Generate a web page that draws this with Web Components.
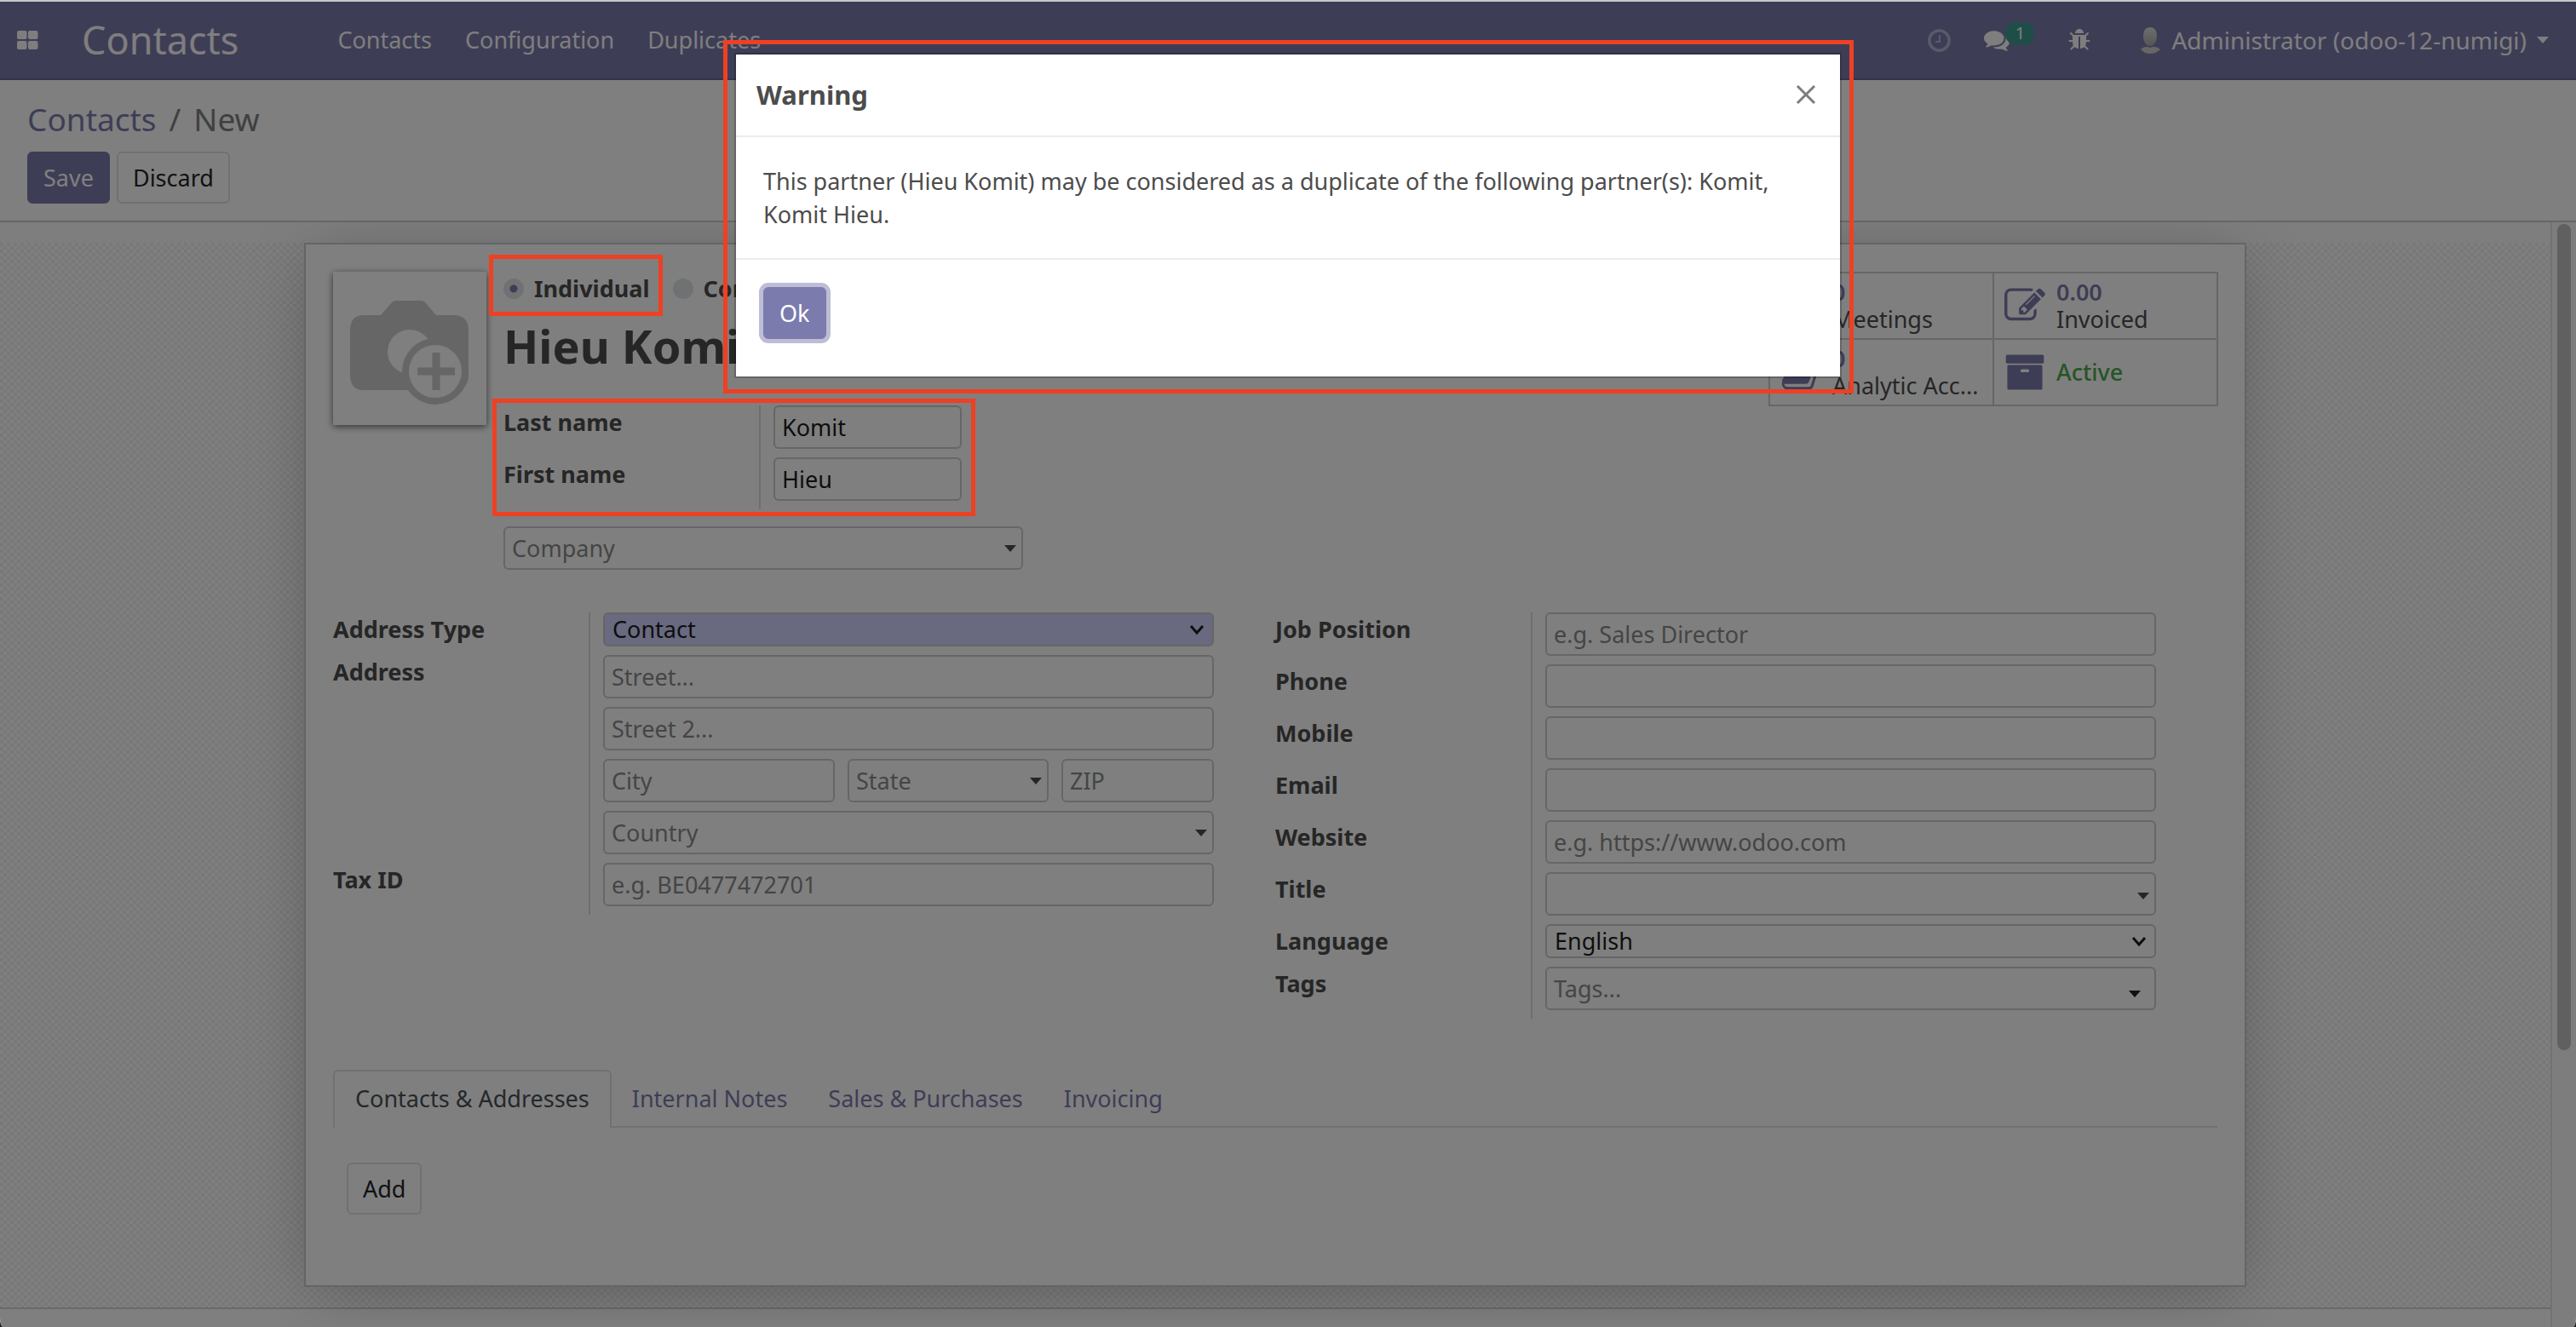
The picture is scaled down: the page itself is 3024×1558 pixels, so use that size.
<!DOCTYPE html>
<html lang="en">
<head>
<meta charset="utf-8">
<title>Contacts - New</title>
<style>
  html, body { margin: 0; height: 100%; }
  body {
    background: #222;
    color: #4c4c4c;
    font: 27px/40px "Noto Sans", "Open Sans", sans-serif;
    overflow: hidden;
  }
</style>
</head>
<body>
<contacts-app></contacts-app>

<script>
const CONTROLS = `
  *, *::before, *::after { box-sizing: border-box; }
  input, select, button { font: inherit; margin: 0; }
  .text, .combo {
    display: block; width: 100%; min-width: 0; height: 51px;
    border: 2px solid #ccc; border-radius: 6px;
    background-color: #fff; color: #1c1c1c; padding: 0 8px; outline: 0;
  }
  .text::placeholder, .combo input::placeholder { color: #8a8a8a; opacity: 1; }
  .combo { display: flex; align-items: center; padding-right: 6px; }
  .combo input { flex: 1; min-width: 0; width: 0; border: 0; padding: 0; background: none; color: inherit; outline: 0; height: 44px; }
  .combo::after { content: ""; border: 7px solid transparent; border-top: 8px solid #4c4c4c; border-bottom: 0; }
  .combo.low { padding-right: 16px; }
  .combo.low::after { border-top-color: #222; margin-top: 12px; }
  .combo.dip::after { margin-top: 4px; }
  .pick { position: relative; display: block; }
  .pick select {
    appearance: none; display: block; width: 100%; height: 40px;
    border: 2px solid #ccc; border-radius: 6px; background: #fff; color: #1c1c1c;
    padding: 0 9px; line-height: 36px; outline: 0;
  }
  .pick.required select { background: #d2d2ff; }
  .pick svg { position: absolute; right: 11px; top: 13px; width: 18px; height: 14px; pointer-events: none; }
`;
const BUTTONS = `
  button { font: inherit; height: 61px; padding: 0 17px; border: 2px solid #dee2e6; border-radius: 6px; background: #fff; color: #212529; }
  button.primary { background: #7c7bad; border-color: #7c7bad; color: #fff; }
`;

function define(name, html, setup) {
  customElements.define(name, class extends HTMLElement {
    connectedCallback() {
      if (this.shadowRoot) return;
      const root = this.attachShadow({ mode: 'open' });
      root.innerHTML = typeof html === 'function' ? html(this) : html;
      if (setup) setup(root, this);
    }
  });
}

const chevron = '<svg viewBox="0 0 18 14" aria-hidden="true"><path d="M2 3l7 8 7-8" fill="none" stroke="#1c1c1c" stroke-width="3"/></svg>';

function control(kind, id, placeholder, value, flags) {
  if (kind === 'select')
    return `<span class="pick ${flags}"><select id="${id}"><option>${value}</option></select>${chevron}</span>`;
  if (kind === 'combo')
    return `<span class="combo ${flags}"><input id="${id}" type="text" placeholder="${placeholder}" aria-label="${placeholder || id}"></span>`;
  return `<input class="text" id="${id}" type="text" placeholder="${placeholder}" value="${value}" aria-label="${placeholder || id}">`;
}

/* One labelled row of a form group */
const ROW = `
  :host { display: grid; grid-template-columns: 300px minmax(0, 1fr); }
  label { font-weight: 700; }
  .cell { border-left: 2px solid #ddd; padding: 0 0 10px 15px; display: flex; flex-direction: column; gap: 10px; }
`;
define('form-field', el => {
  const a = n => el.getAttribute(n) || '';
  return `<style>${CONTROLS}${ROW}</style>
    <label for="field">${a('label')}</label>
    <div class="cell">${control(a('kind'), 'field', a('placeholder'), a('value'), a('look')).replace(/ aria-label="[^"]*"/, '')}</div>`;
});

define('address-field', `<style>${CONTROLS}${ROW}
    .split { display: grid; grid-template-columns: 272fr 236fr 179fr; gap: 15px; }
  </style>
  <label for="street">Address</label>
  <div class="cell">
    ${control('text', 'street', 'Street...', '', '')}
    ${control('text', 'street2', 'Street 2...', '', '')}
    <div class="split">
      ${control('text', 'city', 'City', '', '')}
      ${control('combo', 'state', 'State', '', '')}
      ${control('text', 'zip', 'ZIP', '', '')}
    </div>
    ${control('combo', 'country', 'Country', '', '')}
  </div>`);

define('form-group', `<style>:host { display: block; }</style><slot></slot>`);

define('combo-box', el => `<style>${CONTROLS} :host { display: block; }</style>
  ${control('combo', 'box', el.getAttribute('placeholder') || '', '', '')}`);

const ICONS = {
  edit: 'M888 1184l116-116-152-152-116 116v56h96v96h56zm440-720q-16-16-33 1l-350 350q-17 17-1 33t33-1l350-350q17-17 1-33zm80 594v190q0 119-84.5 203.5t-203.5 84.5h-832q-119 0-203.5-84.5t-84.5-203.5v-832q0-119 84.5-203.5t203.5-84.5h832q63 0 117 25 15 7 18 23 3 17-9 29l-49 49q-14 14-32 8-23-6-45-6h-832q-66 0-113 47t-47 113v832q0 66 47 113t113 47h832q66 0 113-47t47-113v-126q0-13 9-22l64-64q15-15 35-7t20 29zm-96-738l288 288-672 672h-288v-288zm444 132l-92 92-288-288 92-92q28-28 68-28t68 28l152 152q28 28 28 68t-28 68z',
  archive: 'M1088 832q0-26-19-45t-45-19h-256q-26 0-45 19t-19 45 19 45 45 19h256q26 0 45-19t19-45zm576-192v960q0 26-19 45t-45 19h-1408q-26 0-45-19t-19-45v-960q0-26 19-45t45-19h1408q26 0 45 19t19 45zm64-448v256q0 26-19 45t-45 19h-1536q-26 0-45-19t-19-45v-256q0-26 19-45t45-19h1536q26 0 45 19t19 45z',
  book: 'M1703 478q40 57 18 129l-275 906q-19 64-76.5 107.5t-122.5 43.5h-923q-77 0-148.5-53.5t-99.5-131.5q-24-67-2-127 0-4 3-27t4-37q1-8-3-21.5t-3-19.5q2-11 8-21t16.5-23.5 16.5-23.5q23-38 45-91.5t30-91.5q3-10 .5-30t-.5-28q3-11 17-28t17-23q21-36 42-92t25-90q1-9-2.5-32t.5-28q4-13 22-30.5t22-22.5q19-26 42.5-84.5t27.5-96.5q1-8-3-25.5t-2-26.5q2-8 9-18t18-23 17-21q8-12 16.5-30.5t15-35 16-36 19.5-32 26.5-23.5 36-11.5 47.5 5.5l-1 3q38-9 51-9h761q74 0 114 56t18 130l-274 906q-36 119-71.5 153.5t-128.5 34.5h-869q-27 0-38 15-11 16-1 43 24 70 144 70h923q29 0 56-15.5t35-41.5l300-987q7-22 5-57 38 15 59 43z',
  calendar: 'M192 1664h1408v-1024h-1408v1024zM576 448v-288h-64v288zm768 0v-288h-64v288zM1728 384v1280q0 128-128 128h-1408q-128 0-128-128v-1280q0-128 128-128h128v-96q0-160 160-160h64q160 0 160 160v96h384v-96q0-160 160-160h64q160 0 160 160v96h128q128 0 128 128z',
  comments: 'M1408 768q0 139-94 257t-256.5 186.5-353.5 68.5q-86 0-176-16-124 88-278 128-36 9-86 16h-3q-11 0-20.5-8t-11.5-21q-1-3-1-6.5t.5-6.5 2-6l2.5-5 3.5-5.5 4-5 4.5-5 4-4.5q5-6 23-25t26-29.5 22.5-29 25-38.5 20.5-44q-124-72-195-177t-71-224q0-139 94-257t256.5-186.5 353.5-68.5 353.5 68.5 256.5 186.5 94 257zm384 256q0 120-71 224.5t-195 176.5q10 24 20.5 44t25 38.5 22.5 29 26 29.5 23 25q1 1 4 4.5t4.5 5 4 5 3.5 5.5l2.5 5 2 6 .5 6.5-1 6.5q-3 14-13 22t-22 7q-50-7-86-16-154-40-278-128-90 16-176 16-271 0-472-132 58 4 88 4 161 0 309-45t264-129q125-92 192-212t67-254q0-77-23-152 129 71 204 178t75 230z',
  bug: 'M1632 960q0 26-19 45t-45 19h-224q0 171-67 290l208 209q19 19 19 45t-19 45q-18 19-45 19t-45-19l-198-197q-5 5-15 13t-42 28.5-65 36.5-82 29-97 13v-896h-128v896q-51 0-101.5-13.5t-87-33-66-39-43.5-32.5l-15-14-183 207q-20 21-48 21-24 0-43-16-19-18-20.5-44.5t15.5-46.5l202-227q-58-114-58-274h-224q-26 0-45-19t-19-45 19-45 45-19h224v-294l-173-173q-19-19-19-45t19-45 45-19 45 19l173 173h844l173-173q19-19 45-19t45 19 19 45-19 45l-173 173v294h224q26 0 45 19t19 45zm-480-576h-640q0-133 93.5-226.5t226.5-93.5 226.5 93.5 93.5 226.5z'
};
const icon = (name, size) => `<svg width="${size}" height="${size}" viewBox="0 0 1792 1792" fill="currentColor" aria-hidden="true"><path d="${ICONS[name]}"/></svg>`;

define('stat-button', el => {
  const value = el.getAttribute('value');
  return `<style>
    :host { display: block; min-width: 0; border: solid #ccc; border-width: 2px 0 0 2px; }
    button { all: unset; box-sizing: border-box; width: 100%; height: 76px; display: flex; align-items: center; gap: 13px; padding-left: 12px; font: 27px/32px "Noto Sans", sans-serif; white-space: nowrap; }
    svg { flex: none; color: #7c7bad; }
    span { display: block; color: var(--stat-color, #4c4c4c); font-weight: var(--stat-weight, 400); }
    b { display: block; color: #7c7bad; font-weight: 600; }
  </style>
  <button type="button">${icon(el.getAttribute('icon'), 48)}<span>${value ? `<b>${value}</b>` : ''}<slot></slot></span></button>`;
});

define('top-nav', `<style>
    :host { display: flex; align-items: center; height: 92px; box-sizing: border-box; background: #7c7bad; border-bottom: 2px solid #66629c; color: #fcfcfc; padding: 0 32px 0 20px; }
    a { color: inherit; text-decoration: none; }
    svg { display: block; flex: none; }
    .brand { font-size: 45px; line-height: 62px; margin: 0 116px 0 51px; }
    nav { display: flex; gap: 39px; }
    .tray { margin-left: auto; display: flex; align-items: center; }
    button { all: unset; display: flex; align-items: center; }
    .clock { opacity: .45; margin-right: 39px; }
    .chat { position: relative; margin-right: 69px; }
    .badge { position: absolute; left: 25px; top: -6px; min-width: 34px; height: 27px; border-radius: 13px; background: #3c9c8e; font-size: 20px; line-height: 26px; text-align: center; }
    .bug { margin-right: 56px; }
    .user { font-size: 28px; gap: 12px; }
    .user i { border: 7px solid transparent; border-top: 8px solid #fcfcfc; border-bottom: 0; }
  </style>
  <button type="button" aria-label="Apps"><svg width="25" height="22" viewBox="0 0 25 22" fill="currentColor"><rect width="11.500" height="10" rx="2"/><rect x="13" width="11.500" height="10" rx="2"/><rect y="12" width="11.500" height="10" rx="2"/><rect x="13" y="12" width="11.500" height="10" rx="2"/></svg></button>
  <a class="brand" href="#">Contacts</a>
  <nav><a href="#">Contacts</a><a href="#">Configuration</a><a href="#">Duplicates</a></nav>
  <div class="tray">
    <button type="button" class="clock" aria-label="Activities"><svg width="27" height="27" viewBox="0 0 27 27" fill="none" stroke="currentColor"><circle cx="13.500" cy="13.500" r="11.600" stroke-width="3.400"/><path d="M14 7v8H9" stroke-width="2"/></svg></button>
    <button type="button" class="chat" aria-label="Messages">${icon('comments', 30)}<span class="badge">1</span></button>
    <button type="button" class="bug" aria-label="Debug">${icon('bug', 28)}</button>
    <button type="button" class="user"><svg width="25" height="32" viewBox="0 0 25 32"><defs><linearGradient id="g" x2="0" y2="1"><stop stop-color="#ddd"/><stop offset="1" stop-color="#aaa"/></linearGradient></defs><path d="M12 1c5 0 8 4 8 10s-3 12-8 12-8-6-8-12S7 1 12 1z" fill="url(#g)"/><path d="M1 27c3-3 7-4 11-2 4-2 9-1 12 2-3 3-7 5-12 5S4 30 1 27z" fill="#ccc"/></svg><span>Administrator (odoo-12-numigi)</span><i></i></button>
  </div>`);

define('control-panel', `<style>${BUTTONS}
    :host { display: block; background: #fff; border-bottom: 2px solid #ccc; padding: 21px 32px 20px; }
    .crumbs { display: flex; gap: 15px; font-size: 37px; line-height: 50px; color: #808080; margin-bottom: 13px; }
    .crumbs a { color: #7c7bad; text-decoration: none; }
    .actions { display: flex; gap: 8px; }
  </style>
  <nav class="crumbs"><a href="#">Contacts</a><span>/</span><span>New</span></nav>
  <div class="actions"><button type="button" class="primary">Save</button><button type="button">Discard</button></div>`);

define('image-picker', `<style>
    :host { display: block; width: 180px; height: 180px; flex: none; background: #fff; box-shadow: 0 2px 8px rgba(0,0,0,.6); }
    svg { display: block; }
  </style>
  <svg width="180" height="180" viewBox="0 0 180 180" role="img" aria-label="Add a photo">
    <path fill="#ccc" d="M36 51h20l13-15q2-2 5-2h29q3 0 5 2l13 15h20q18 0 18 18v52q0 18-18 18H36q-16 0-16-18V69q0-18 16-18z"/>
    <circle cx="90" cy="94" r="26" fill="#fff"/>
    <circle cx="120" cy="117" r="39" fill="#ccc"/>
    <circle cx="120" cy="117" r="31" fill="#fff"/>
    <path d="M121 95v44M99 117h44" stroke="#ccc" stroke-width="9"/>
  </svg>`);

define('kind-choice', `<style>
    :host { display: flex; gap: 27px; font-weight: 700; }
    label { display: flex; align-items: center; gap: 12px; position: relative; }
    input { appearance: none; margin: 0; width: 24px; height: 24px; border-radius: 50%; background: #dee2e6; }
    input:checked { background: radial-gradient(circle, #7c7bad 4px, #dfe2e7 5px); }
    .marked::after { content: ""; position: absolute; inset: -20px -15px -12px -17px; border: 5px solid #ee4023; z-index: 20; pointer-events: none; }
  </style>
  <label class="marked"><input type="radio" name="kind" checked>Individual</label>
  <label><input type="radio" name="kind">Company</label>`);

define('note-book', `<style>${BUTTONS}
    :host { display: block; }
    nav { display: flex; border-bottom: 2px solid #dee2e6; }
    a { color: #7c7bad; text-decoration: none; padding: 12px 22px; border: 2px solid transparent; border-bottom: 0; }
    a.on { color: #495057; background: #fff; border-color: #dee2e6; border-radius: 6px 6px 0 0; margin-bottom: -2px; padding: 12px 24px 14px; }
    .page { padding: 41px 16px 51px; }
  </style>
  <nav><a class="on" href="#">Contacts &amp; Addresses</a><a href="#">Internal Notes</a><a href="#">Sales &amp; Purchases</a><a href="#">Invoicing</a></nav>
  <div class="page"><button type="button">Add</button></div>`);

define('contact-sheet', `<style>
    :host { display: block; box-sizing: border-box; position: relative; max-width: 2280px; margin: 0 auto; padding: 32px; border: 2px solid #c8c8d3; background: #fff; box-shadow: 0 10px 70px -10px rgba(0,0,0,.28); }
    header { display: flex; align-items: flex-start; gap: 20px; margin-bottom: 50px; }
    .who { flex: 1; min-width: 0; }
    h1 { font-size: 54px; line-height: 74px; font-weight: 700; margin: 10px 0 33px; }
    .names { position: relative; width: 538px; margin-bottom: 20px; }
    .names::after { content: ""; position: absolute; inset: -8px -16px -8px -13px; border: 5px solid #ee4023; z-index: 20; pointer-events: none; }
    combo-box { width: 610px; }
    .stats { display: grid; grid-template-columns: repeat(2, 263px); width: 528px; border: solid #ccc; border-width: 0 2px 2px 0; box-sizing: border-box; margin-right: -1px; }
    .active { --stat-color: #4caa4c; --stat-weight: 500; }
    .groups { display: grid; grid-template-columns: 1fr 1fr; margin-bottom: 60px; align-items: start; }
    form-group { padding-right: 72px; }
  </style>
  <header>
    <image-picker></image-picker>
    <div class="who">
      <kind-choice></kind-choice>
      <h1>Hieu Komit</h1>
      <div class="names">
        <form-field label="Last name" kind="text" value="Komit"></form-field>
        <form-field label="First name" kind="text" value="Hieu"></form-field>
      </div>
      <combo-box placeholder="Company"></combo-box>
    </div>
    <div class="stats">
      <stat-button icon="calendar" value="0">Meetings</stat-button>
      <stat-button icon="edit" value="0.00">Invoiced</stat-button>
      <stat-button icon="book" value="0">Analytic Acc...</stat-button>
      <stat-button icon="archive" class="active">Active</stat-button>
    </div>
  </header>
  <div class="groups">
    <form-group>
      <form-field label="Address Type" kind="select" value="Contact" look="required"></form-field>
      <address-field></address-field>
      <form-field label="Tax ID" kind="text" placeholder="e.g. BE0477472701"></form-field>
    </form-group>
    <form-group>
      <form-field label="Job Position" kind="text" placeholder="e.g. Sales Director"></form-field>
      <form-field label="Phone" kind="text"></form-field>
      <form-field label="Mobile" kind="text"></form-field>
      <form-field label="Email" kind="text"></form-field>
      <form-field label="Website" kind="text" placeholder="e.g. https://www.odoo.com"></form-field>
      <form-field label="Title" kind="combo" look="dip"></form-field>
      <form-field label="Language" kind="select" value="English"></form-field>
      <form-field label="Tags" kind="combo" placeholder="Tags..." look="low"></form-field>
    </form-group>
  </div>
  <note-book></note-book>`);

define('warning-dialog', `<style>${BUTTONS}
    :host { position: fixed; inset: 2px 0 0; z-index: 10; background: rgba(0,0,0,.5); border-radius: 0 0 4px 4px / 0 0 11px 11px; }
    section { position: relative; box-sizing: border-box; width: 1300px; max-width: 96%; margin: 60px auto 0; border: 2px solid rgba(0,0,0,.2); background: #fff padding-box; color: #4c4c4c; }
    section::after { content: ""; position: absolute; inset: -17px -16px -20px -15px; border: 5px solid #ee4023; pointer-events: none; }
    header { display: flex; align-items: center; justify-content: space-between; box-sizing: border-box; height: 97px; padding: 0 28px 2px 24px; border-bottom: 2px solid #e9ecef; }
    h4 { margin: 0; font-size: 31px; line-height: 42px; font-weight: 700; }
    .close { all: unset; }
    .close svg { display: block; }
    p { margin: 0; padding: 32px; line-height: 39px; border-bottom: 2px solid #e9ecef; }
    footer { padding: 32px 32px 44px; display: flex; }
    .primary { box-shadow: 0 0 0 5px #bebdd6; outline: 0; }
  </style>
  <section role="dialog" aria-modal="true" aria-labelledby="title">
    <header><h4 id="title">Warning</h4><button class="close" type="button" aria-label="Close"><svg width="24" height="24" viewBox="0 0 24 24"><path d="M2 2l20 20M22 2L2 22" stroke="#7c7c7c" stroke-width="3"/></svg></button></header>
    <p>This partner (Hieu Komit) may be considered as a duplicate of the following partner(s): Komit, Komit Hieu.</p>
    <footer><button type="button" class="primary">Ok</button></footer>
  </section>`);

define('contacts-app', `<style>
    :host { display: flex; flex-direction: column; height: 100vh; box-sizing: border-box; border-top: 2px solid #c9c9cc; background: #fff; overflow: hidden; border-radius: 0 0 4px 4px / 0 0 11px 11px; }
    top-nav, control-panel { flex: none; }
    .body { flex: 1; min-height: 0; display: flex; }
    .view { flex: 1; min-width: 0; display: flex; flex-direction: column; overflow: hidden; }
    .lead { flex: none; height: 24px; background: #fcfcfc; }
    .desk { flex: none; padding-bottom: 24px; border-bottom: 2px solid #d4d4d4; background: conic-gradient(#fefefe 25%, #f0f0f0 0 50%, #fefefe 0 75%, #f0f0f0 0) 0 0 / 8px 8px; }
    .tail { flex: 1; background: #fff; }
    .rail { flex: none; width: 30px; box-sizing: border-box; border-left: 2px solid #e4e4e4; background: #fbfbfb; padding: 2px 6px; }
    .thumb { height: 75%; border-radius: 8px; background: #c1c1c1; }
  </style>
  <top-nav></top-nav>
  <control-panel></control-panel>
  <div class="body">
    <main class="view">
      <div class="lead"></div>
      <div class="desk"><contact-sheet></contact-sheet></div>
      <div class="tail"></div>
    </main>
    <div class="rail"><div class="thumb"></div></div>
  </div>
  <warning-dialog></warning-dialog>`);
</script>
</body>
</html>
